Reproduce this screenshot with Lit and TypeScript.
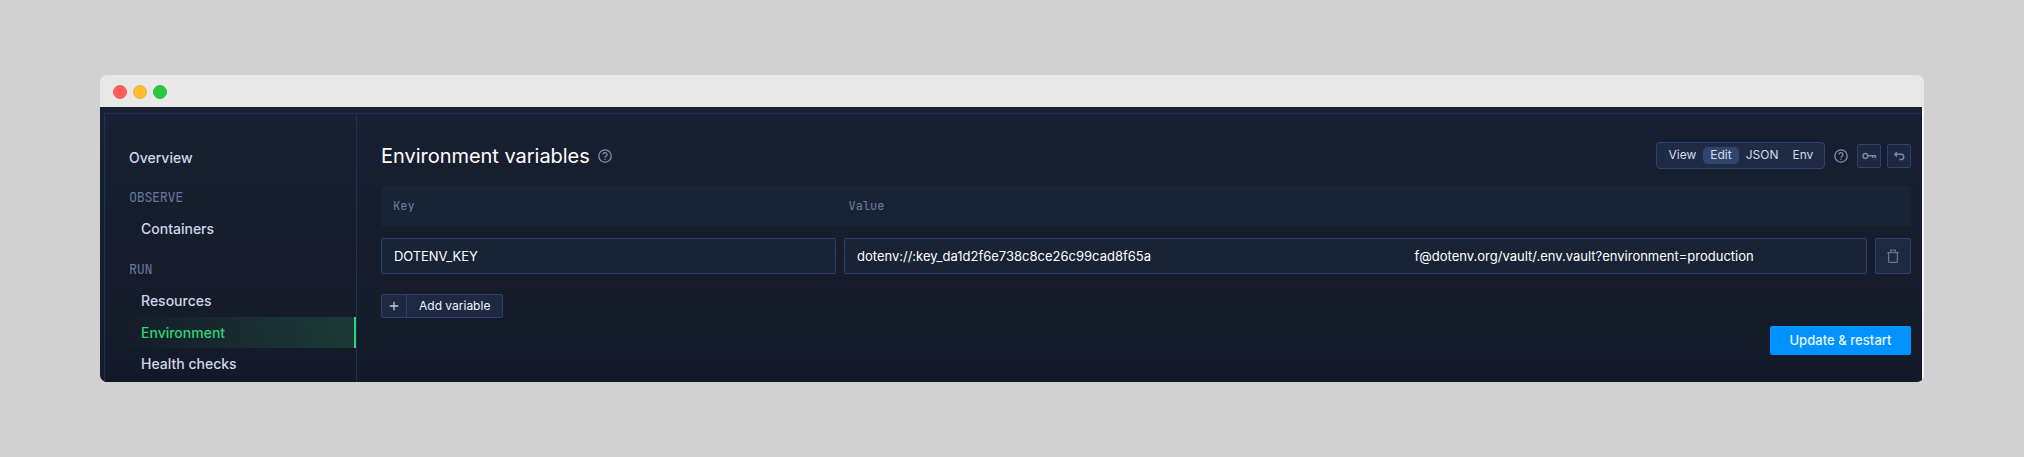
import { LitElement, html, css, svg } from "lit";
import { customElement, property, state } from "lit/decorators.js";
import { classMap } from "lit/directives/class-map.js";

const glyphs: Record<string, unknown> = {
  help: svg`<circle cx="7" cy="7" r="6.2"/><path d="M5 5.6a2 2 0 1 1 3 1.7c-.7.4-1 .7-1 1.3"/><path d="M7 9.6v1.2"/>`,
  key: svg`<circle cx="3.4" cy="7" r="2.4" stroke-width="1.5"/><path stroke-width="1.5" d="M5.8 6.7h7.6v2.6M10.6 6.7v2.2"/>`,
  undo: svg`<path d="M4.9 3.2 2.8 5.3l2.1 2.1M3 5.3h6.1a2.6 2.6 0 0 1 0 5.2H7.3" stroke-width="1.5"/>`,
  trash: svg`<path d="M1.2 3.6h11.6M4.6 3.4V1.1h4.8v2.3M2.6 3.8v8.6c0 .6.3.9.9.9h7c.6 0 .9-.3.9-.9V3.8"/>`,
  plus: svg`<path d="M7 2v10M2 7h10" stroke-width="1.5"/>`,
};

@customElement("ui-icon")
export class UiIcon extends LitElement {
  @property() name = "help";
  static styles = css`
    :host { display: block; width: 14px; height: 14px; flex: none; }
    svg { display: block; width: 100%; height: 100%; fill: none; stroke: currentColor; stroke-width: 1.3; overflow: visible; }
  `;
  render() {
    return html`<svg viewBox="0 0 14 14">${glyphs[this.name]}</svg>`;
  }
}

@customElement("side-nav")
export class SideNav extends LitElement {
  @property() active = "Environment";
  static styles = css`
    :host { display: block; width: 251px; flex: none; border-right: 1px solid #202f55; padding-top: 28px; box-sizing: content-box; }
    .item { height: 31px; line-height: 31px; margin-bottom: 0.5px; padding-left: 24px; color: #cfd8e8; font-weight: 500; box-sizing: border-box; }
    .child { padding-left: 36px; }
    .heading { height: 31px; padding-left: 24px; margin-top: 9px; color: #64779b; font: 13.5px/31px "JetBrains Mono", "DejaVu Sans Mono", monospace; letter-spacing: -0.4px; }
    .child + .heading { margin-top: 10px; }
    .active { color: #2bd576; border-right: 2px solid #2bd576; background: linear-gradient(90deg, rgba(75, 220, 130, 0) 5%, rgba(75, 220, 130, 0.16)); }
  `;
  private link(label: string) {
    return html`<div class=${classMap({ item: true, child: true, active: label === this.active })}>${label}</div>`;
  }
  render() {
    return html`
      <div class="item">Overview</div>
      <div class="heading">OBSERVE</div>
      ${this.link("Containers")}
      <div class="heading">RUN</div>
      ${["Resources", "Environment", "Health checks"].map((l) => this.link(l))}
    `;
  }
}

@customElement("env-editor")
export class EnvEditor extends LitElement {
  @state() private mode = "Edit";
  static styles = css`
    :host { display: flex; flex-direction: column; flex: 1; min-width: 0; padding: 28px 11px 0 24px; }
    .top { display: flex; align-items: center; height: 28px; color: #8090b0; }
    .title { margin: 0 8px 0 0; font-size: 20px; line-height: 28px; font-weight: 400; letter-spacing: -0.03px; color: #fff; }
    .tabs { margin-left: auto; align-self: flex-start; display: flex; align-items: flex-start; box-sizing: border-box; width: 169px; height: 27px; padding: 4px 4px 4px 4.5px; border: 1px solid #2e4270; border-radius: 4px; background: #1f2a44; font-size: 12px; line-height: 16px; color: #d3dceb; }
    .tab { padding: 0 7px; border-radius: 5px; height: 17px; }
    .on { background: #31456f; }
    .q { margin: 0 9px 0; }
    .square { display: flex; align-items: center; justify-content: center; box-sizing: border-box; width: 24px; height: 24px; border: 1px solid #2e4270; border-radius: 2px; background: #1e2840; margin-right: 6px; color: #7887a5; }
    .square:last-child { margin-right: 0; }
    .cols, .row { display: grid; grid-template-columns: 455px 1fr 36px; column-gap: 8px; }
    .cols { margin-top: 16px; height: 40px; background: #192336; color: #6c7d9d; font: 12px/40px "JetBrains Mono", "DejaVu Sans Mono", monospace; }
    .cols span { padding-left: 4.5px; }
    .cols span:first-child { padding-left: 12px; }
    .row { margin-top: 12px; height: 36px; }
    .field { box-sizing: border-box; height: 36px; line-height: 35px; padding-left: 12px; border: 1px solid #2e4270; border-radius: 2px; background: #192336; color: #fff; font-size: 13px; display: flex; white-space: nowrap; }
    .name { letter-spacing: -0.1px; }
    .head { width: 557.5px; flex: none; }
    .trash { width: 36px; height: 36px; color: #64738f; }
    .add { margin-top: 20px; display: flex; align-items: stretch; align-self: flex-start; box-sizing: border-box; width: 122px; height: 24px; border: 1px solid #2e4270; border-radius: 2px; background: #1e2840; color: #f0f4fa; font-size: 12px; line-height: 22px; }
    .plus { width: 24px; border-right: 1px solid #2e4270; display: flex; align-items: center; justify-content: center; color: #c3cad8; }
    .plus ui-icon { width: 12px; height: 12px; }
    .label { padding-left: 12px; }
    .save { margin-top: 8px; align-self: flex-end; box-sizing: border-box; width: 141px; height: 29px; line-height: 29px; text-align: center; border-radius: 2px; background: #0093ff; color: #eaf5ff; font-size: 13px; font-weight: 500; letter-spacing: 0.05px; }
  `;
  render() {
    return html`
      <div class="top">
        <h1 class="title">Environment variables</h1>
        <ui-icon name="help"></ui-icon>
        <div class="tabs">
          ${["View", "Edit", "JSON", "Env"].map(
            (t) => html`<span class=${classMap({ tab: true, on: t === this.mode })} @click=${() => (this.mode = t)}>${t}</span>`
          )}
        </div>
        <ui-icon class="q" name="help"></ui-icon>
        <div class="square"><ui-icon name="key"></ui-icon></div>
        <div class="square"><ui-icon name="undo"></ui-icon></div>
      </div>
      <div class="cols"><span>Key</span><span>Value</span></div>
      <div class="row">
        <div class="field name">DOTENV_KEY</div>
        <div class="field">
          <span class="head">dotenv://:key_da1d2f6e738c8ce26c99cad8f65a</span>
          <span>f@dotenv.org/vault/.env.vault?environment=production</span>
        </div>
        <div class="square trash"><ui-icon name="trash"></ui-icon></div>
      </div>
      <div class="add"><span class="plus"><ui-icon name="plus"></ui-icon></span><span class="label">Add variable</span></div>
      <div class="save">Update &amp; restart</div>
    `;
  }
}

@customElement("app-root")
export class AppRoot extends LitElement {
  static styles = css`
    :host { display: block; box-sizing: border-box; height: 457px; padding: 75px 100px; background: #d1d1d1; font: 14px "Inter", "Liberation Sans", sans-serif; }
    .window { width: 1824px; height: 307px; border-radius: 8px 8px 7px 7px; overflow: hidden; background: #f5f5f5; display: flex; flex-direction: column; }
    .bar { height: 32px; flex: none; display: flex; align-items: center; gap: 6px; padding: 2px 0 0 13px; box-sizing: border-box; background: #e8e8e8; }
    .dot { width: 14px; height: 14px; border-radius: 50%; box-sizing: border-box; }
    .close { background: #ff5f57; border: 1px solid #f4605a; }
    .min { background: #ffbd2e; border: 1px solid #e9ae45; }
    .max { background: #28c940; border: 1px solid #2fb848; }
    .screen { flex: 1; box-sizing: border-box; width: 1822px; padding: 6px 0 0 4px; background: linear-gradient(180deg, #182132, #141d2b); border-radius: 0 0 7px 0; display: flex; min-height: 0; }
    .panel { flex: 1; display: flex; border: 1px solid #202f55; border-width: 1px 0 0 1px; background: linear-gradient(180deg, #171f32, #151e2d 34%, #161c2b 50%, #141b29 80%, #131929); }
  `;
  render() {
    return html`
      <div class="window">
        <div class="bar"><span class="dot close"></span><span class="dot min"></span><span class="dot max"></span></div>
        <div class="screen">
          <div class="panel"><side-nav></side-nav><env-editor></env-editor></div>
        </div>
      </div>
    `;
  }
}
